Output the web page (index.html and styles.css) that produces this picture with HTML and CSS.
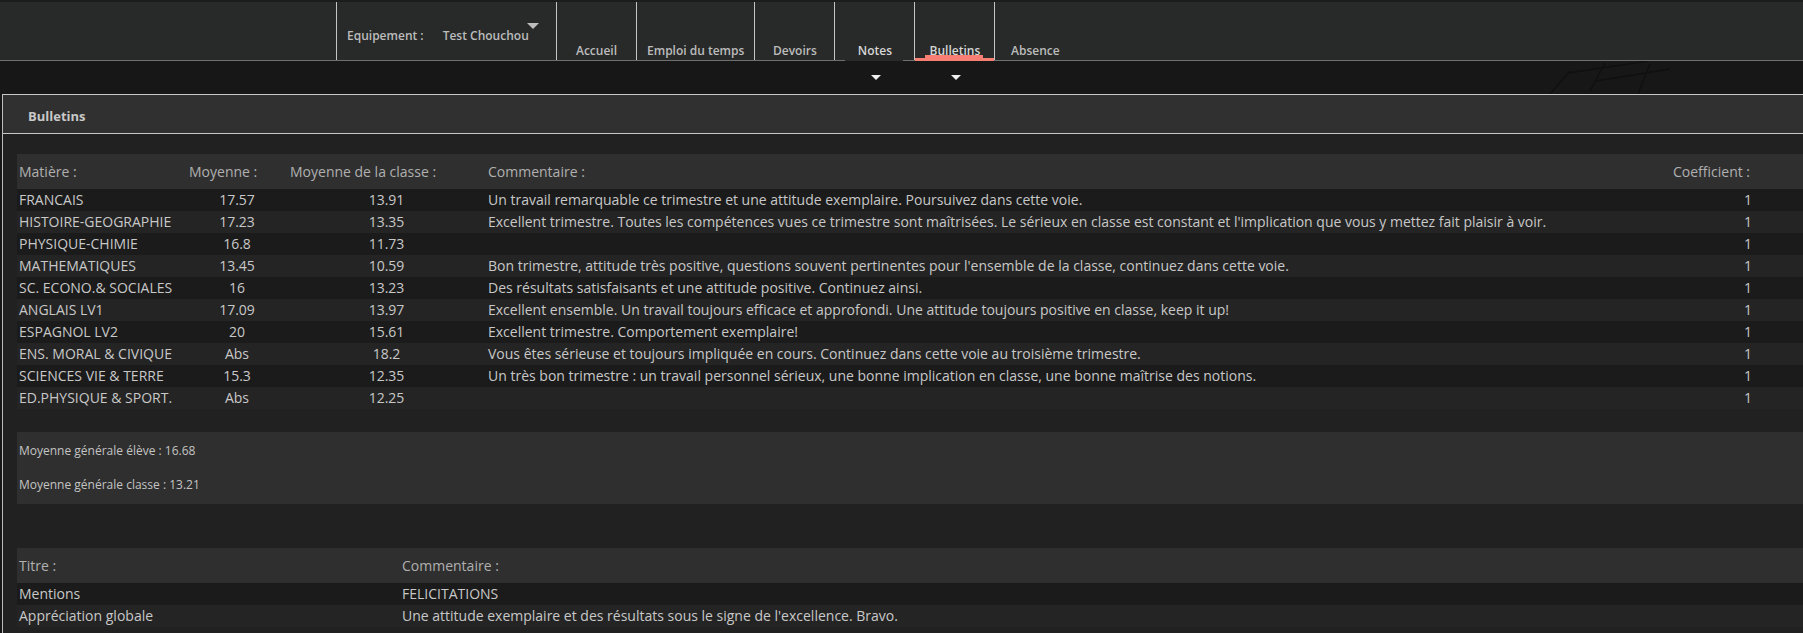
FILE: index.html
```html
<!DOCTYPE html>
<html lang="fr">
<head>
<meta charset="utf-8">
<title>Bulletins</title>
<link rel="stylesheet" href="styles.css">
</head>
<body>
<header class="topbar">
  <nav class="nav">
    <div class="equip">
      <span class="equip-label">Equipement :</span>
      <span class="equip-value">Test Chouchou</span>
      <span class="equip-caret"></span>
    </div>
    <a class="tab">Accueil</a>
    <a class="tab">Emploi du temps</a>
    <a class="tab">Devoirs</a>
    <a class="tab tab-notes">Notes<span class="tab-caret"></span></a>
    <a class="tab tab-active">Bulletins<span class="tab-caret"></span></a>
    <a class="tab tab-last">Absence</a>
  </nav>
</header>
<div class="band">
  <svg class="band-sketch" width="260" height="33" viewBox="0 0 260 33" aria-hidden="true">
    <path d="M20 33 L40 10 M38 12 L118 0 M60 30 L75 2 M66 20 L140 8 M108 33 L120 3" stroke="#101010" stroke-width="1.5" fill="none"/>
  </svg>
</div>
<section class="panel">
  <h2 class="panel-title">Bulletins</h2>
  <div class="panel-body">
    <table class="grades">
      <colgroup>
        <col class="w-mat"><col class="w-moy"><col class="w-cls"><col class="w-com"><col class="w-coef">
      </colgroup>
      <thead>
        <tr><th>Matière :</th><th>Moyenne :</th><th>Moyenne de la classe :</th><th>Commentaire :</th><th>Coefficient :</th></tr>
      </thead>
      <tbody>
        <tr><td>FRANCAIS</td><td class="c">17.57</td><td class="c">13.91</td><td>Un travail remarquable ce trimestre et une attitude exemplaire. Poursuivez dans cette voie.</td><td class="c">1</td></tr>
        <tr><td>HISTOIRE-GEOGRAPHIE</td><td class="c">17.23</td><td class="c">13.35</td><td>Excellent trimestre. Toutes les compétences vues ce trimestre sont maîtrisées. Le sérieux en classe est constant et l'implication que vous y mettez fait plaisir à voir.</td><td class="c">1</td></tr>
        <tr><td>PHYSIQUE-CHIMIE</td><td class="c">16.8</td><td class="c">11.73</td><td></td><td class="c">1</td></tr>
        <tr><td>MATHEMATIQUES</td><td class="c">13.45</td><td class="c">10.59</td><td>Bon trimestre, attitude très positive, questions souvent pertinentes pour l'ensemble de la classe, continuez dans cette voie.</td><td class="c">1</td></tr>
        <tr><td>SC. ECONO.&amp; SOCIALES</td><td class="c">16</td><td class="c">13.23</td><td>Des résultats satisfaisants et une attitude positive. Continuez ainsi.</td><td class="c">1</td></tr>
        <tr><td>ANGLAIS LV1</td><td class="c">17.09</td><td class="c">13.97</td><td>Excellent ensemble. Un travail toujours efficace et approfondi. Une attitude toujours positive en classe, keep it up!</td><td class="c">1</td></tr>
        <tr><td>ESPAGNOL LV2</td><td class="c">20</td><td class="c">15.61</td><td>Excellent trimestre. Comportement exemplaire!</td><td class="c">1</td></tr>
        <tr><td>ENS. MORAL &amp; CIVIQUE</td><td class="c">Abs</td><td class="c">18.2</td><td>Vous êtes sérieuse et toujours impliquée en cours. Continuez dans cette voie au troisième trimestre.</td><td class="c">1</td></tr>
        <tr><td>SCIENCES VIE &amp; TERRE</td><td class="c">15.3</td><td class="c">12.35</td><td>Un très bon trimestre : un travail personnel sérieux, une bonne implication en classe, une bonne maîtrise des notions.</td><td class="c">1</td></tr>
        <tr><td>ED.PHYSIQUE &amp; SPORT.</td><td class="c">Abs</td><td class="c">12.25</td><td></td><td class="c">1</td></tr>
      </tbody>
    </table>

    <div class="summary">
      <p>Moyenne générale élève : 16.68</p>
      <p>Moyenne générale classe : 13.21</p>
    </div>

    <table class="mentions">
      <colgroup><col class="w-titre"><col class="w-mcom"></colgroup>
      <thead>
        <tr><th>Titre :</th><th>Commentaire :</th></tr>
      </thead>
      <tbody>
        <tr><td>Mentions</td><td>FELICITATIONS</td></tr>
        <tr><td>Appréciation globale</td><td>Une attitude exemplaire et des résultats sous le signe de l'excellence. Bravo.</td></tr>
      </tbody>
    </table>
  </div>
</section>
</body>
</html>
```

FILE: styles.css
```css
html, body {
  margin: 0;
  padding: 0;
  overflow: hidden;
}
body {
  background: #171717;
  font-family: "Open Sans", "Liberation Sans", sans-serif;
  color: #c8c8c8;
}

/* ---------- top navigation ---------- */
.topbar {
  position: relative;
  z-index: 2;
  border-top: 2px solid #1c1d1d;
  border-bottom: 1px solid #6e6f6f;
  background: #282a29;
  height: 58px;
  padding-left: 336px;
}
.nav {
  display: flex;
  height: 58px;
  font-size: 12px;
  font-weight: 600;
  line-height: 16px;
  color: #bcbcbc;
}
.equip {
  box-sizing: border-box;
  width: 221px;
  display: flex;
  align-items: flex-start;
  padding: 26px 0 0 10px;
  border-left: 1px solid #c4c4c4;
  border-right: 1px solid #c4c4c4;
}
.equip-value {
  margin-left: 19px;
}
.equip-caret {
  margin: -5px 0 0 -2px;
  width: 0;
  height: 0;
  border-left: 6px solid transparent;
  border-right: 6px solid transparent;
  border-top: 6px solid #bdbdbd;
}
.tab {
  position: relative;
  box-sizing: border-box;
  min-width: 80px;
  padding: 0 10px 1px;
  display: flex;
  align-items: flex-end;
  justify-content: center;
  border-right: 1px solid #c4c4c4;
  text-decoration: none;
}
.tab-last {
  border-right: none;
}
.tab-notes,
.tab-active {
  color: #d6d6d6;
}
.tab-notes::after {
  content: "";
  position: absolute;
  left: 10px;
  right: 11px;
  bottom: -1px;
  height: 1px;
  background: #282a29;
}
.tab-active::before {
  content: "";
  position: absolute;
  left: 10px;
  right: 11px;
  bottom: 2px;
  height: 3px;
  background: #f77e73;
}
.tab-active::after {
  content: "";
  position: absolute;
  left: 0;
  right: 0;
  bottom: -1px;
  height: 3px;
  background: #f77e73;
}
.tab-caret {
  position: absolute;
  top: calc(100% + 15px);
  left: 50%;
  margin-left: -4px;
  width: 0;
  height: 0;
  border-left: 5px solid transparent;
  border-right: 5px solid transparent;
  border-top: 5px solid #f0f0f0;
}

.band {
  position: relative;
  height: 33px;
  background: #171717;
}
.band-sketch {
  position: absolute;
  left: 1530px;
  top: 0;
}

/* ---------- panel ---------- */
.panel {
  margin-left: 2px;
  width: 1900px;
  border-left: 1px solid #bdbdbd;
  border-top: 1px solid #c8c8c8;
  background: #212121;
}
.panel-title {
  margin: 0;
  padding: 12px 25px 8px;
  line-height: 18px;
  font-size: 13px;
  font-weight: 700;
  color: #c8c8c8;
  background: #303030;
  border-bottom: 1px solid #c8c8c8;
}
.panel-body {
  padding: 20px 14px 30px;
}

/* ---------- tables ---------- */
.grades,
.mentions {
  border-collapse: collapse;
  table-layout: fixed;
  width: 1809px;
  font-size: 14px;
}
.w-mat { width: 170px; }
.w-moy { width: 101px; }
.w-cls { width: 198px; }
.w-com { width: 1185px; }
.w-coef { width: 155px; }
.w-titre { width: 383px; }
.w-mcom { width: 1426px; }

.grades th,
.mentions th {
  height: 35px;
  padding: 0 3px 0 2px;
  text-align: left;
  font-weight: 400;
  color: #b0b0b0;
  background: #2f2f2f;
  white-space: nowrap;
}
.grades td,
.mentions td {
  height: 22px;
  padding: 0 3px 0 2px;
  line-height: 22px;
  color: #c8c8c8;
  white-space: nowrap;
}
.grades tbody tr:nth-child(odd),
.mentions tbody tr:nth-child(odd) {
  background: #1b1b1b;
}
.grades tbody tr:nth-child(even),
.mentions tbody tr:nth-child(even) {
  background: #242424;
}
.grades td.c {
  text-align: center;
}

/* ---------- summary ---------- */
.summary {
  margin: 23px 0 44px;
  width: 1809px;
  box-sizing: border-box;
  padding: 10px 2px 11px;
  background: #2f2f2f;
  font-size: 12px;
  line-height: 17px;
  color: #c4c4c4;
}
.summary p {
  margin: 0;
}
.summary p + p {
  margin-top: 17px;
}
```
